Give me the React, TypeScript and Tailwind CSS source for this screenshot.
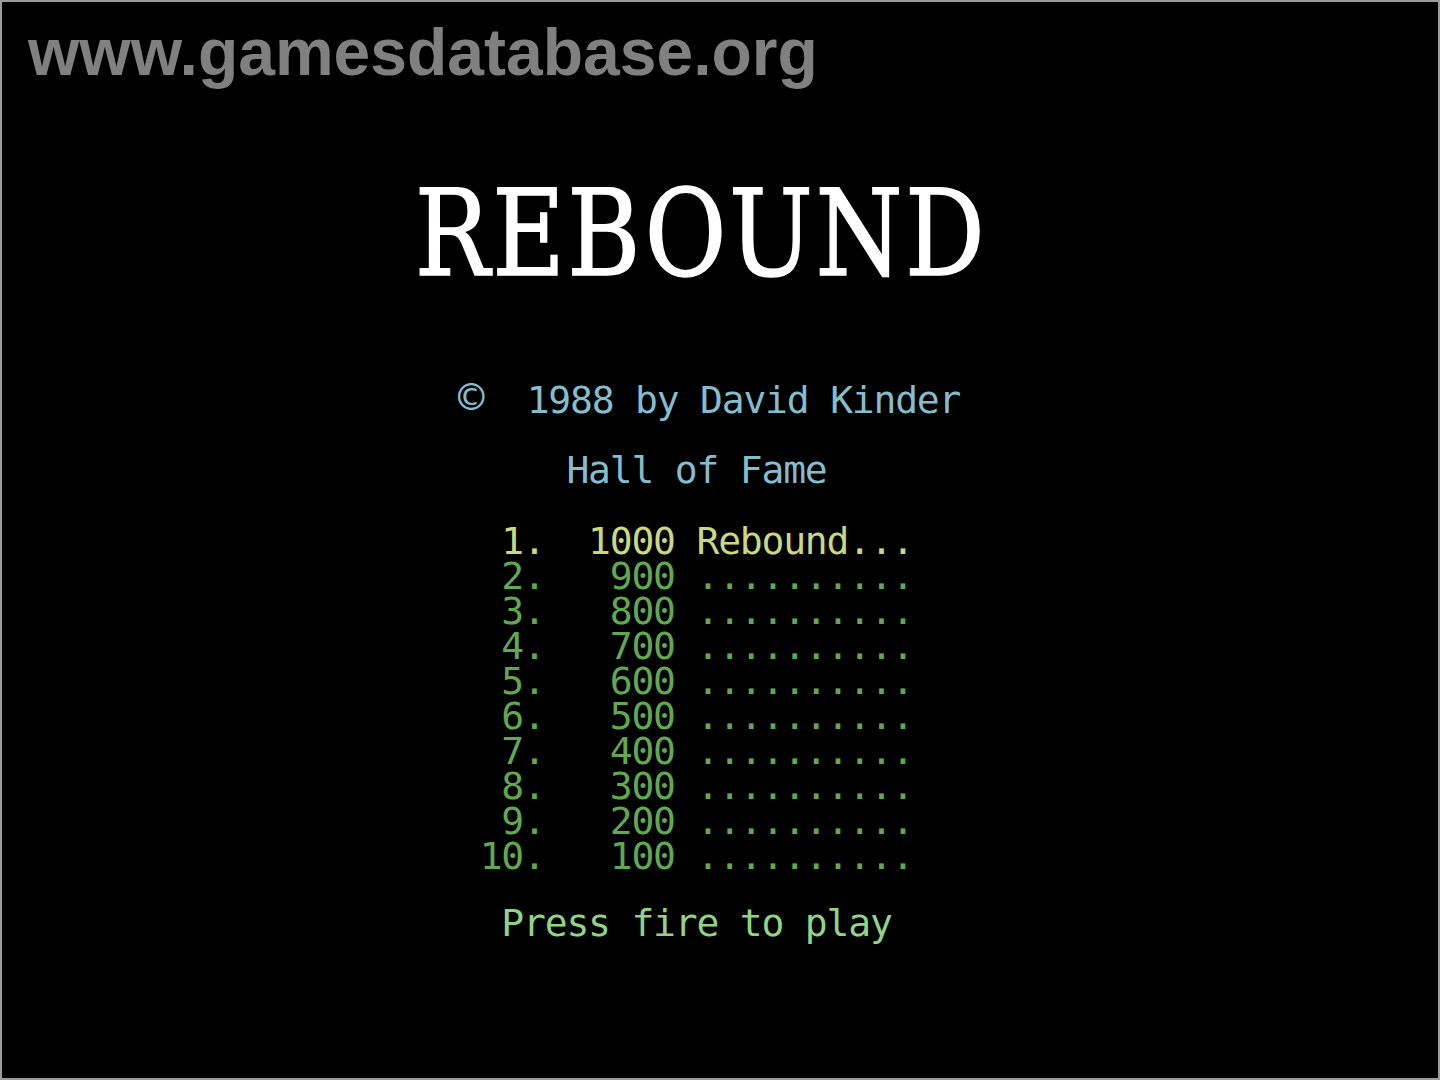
const scores = [
  { rank: 1, score: 1000, name: "Rebound..." },
  { rank: 2, score: 900, name: ".........." },
  { rank: 3, score: 800, name: ".........." },
  { rank: 4, score: 700, name: ".........." },
  { rank: 5, score: 600, name: ".........." },
  { rank: 6, score: 500, name: ".........." },
  { rank: 7, score: 400, name: ".........." },
  { rank: 8, score: 300, name: ".........." },
  { rank: 9, score: 200, name: ".........." },
  { rank: 10, score: 100, name: ".........." },
];

// one text cell of the old screen is ~21.7px wide
const mono = "font-['DejaVu_Sans_Mono',monospace] text-[38px] leading-[35px] tracking-[-1.2px] whitespace-pre";

export default function App() {
  return (
    <div className="w-[1440px] h-[1080px] bg-black border-2 border-[#9a9a9a] overflow-hidden flex flex-col">
      <div className="pl-[26px] pt-[10px] h-[100px]">
        <span className="font-['Liberation_Sans',Arial,sans-serif] font-bold text-[66px] leading-[80px] text-[#808080]">
          www.gamesdatabase.org
        </span>
      </div>

      <div className="mt-[72px] flex justify-center pr-[38px]">
        <span className="inline-block font-['DejaVu_Serif',serif] text-[120px] leading-[120px] text-white scale-x-[0.83] tracking-[3px] [-webkit-text-stroke:1.5px_white]">
          REBOUND
        </span>
      </div>

      <div className={`pl-[456px] mt-[86px] flex flex-col ${mono}`}>
        <div className="text-[#86bccb]">
          <span className="text-[44px] leading-[35px]">©</span>
          {"  1988 by David Kinder"}
        </div>
        <div className="text-[#86bccb] mt-[35px]">{"     Hall of Fame"}</div>
        <div className="mt-[36px] flex flex-col">
          {scores.map((r) => (
            <div key={r.rank} className={r.rank === 1 ? "text-[#cbd97e]" : "text-[#62a84c]"}>
              {" " + String(r.rank).padStart(2) + "." + String(r.score).padStart(6) + " " + r.name}
            </div>
          ))}
        </div>
        <div className="text-[#92d482] mt-[32px]">{"  Press fire to play"}</div>
      </div>
    </div>
  );
}
